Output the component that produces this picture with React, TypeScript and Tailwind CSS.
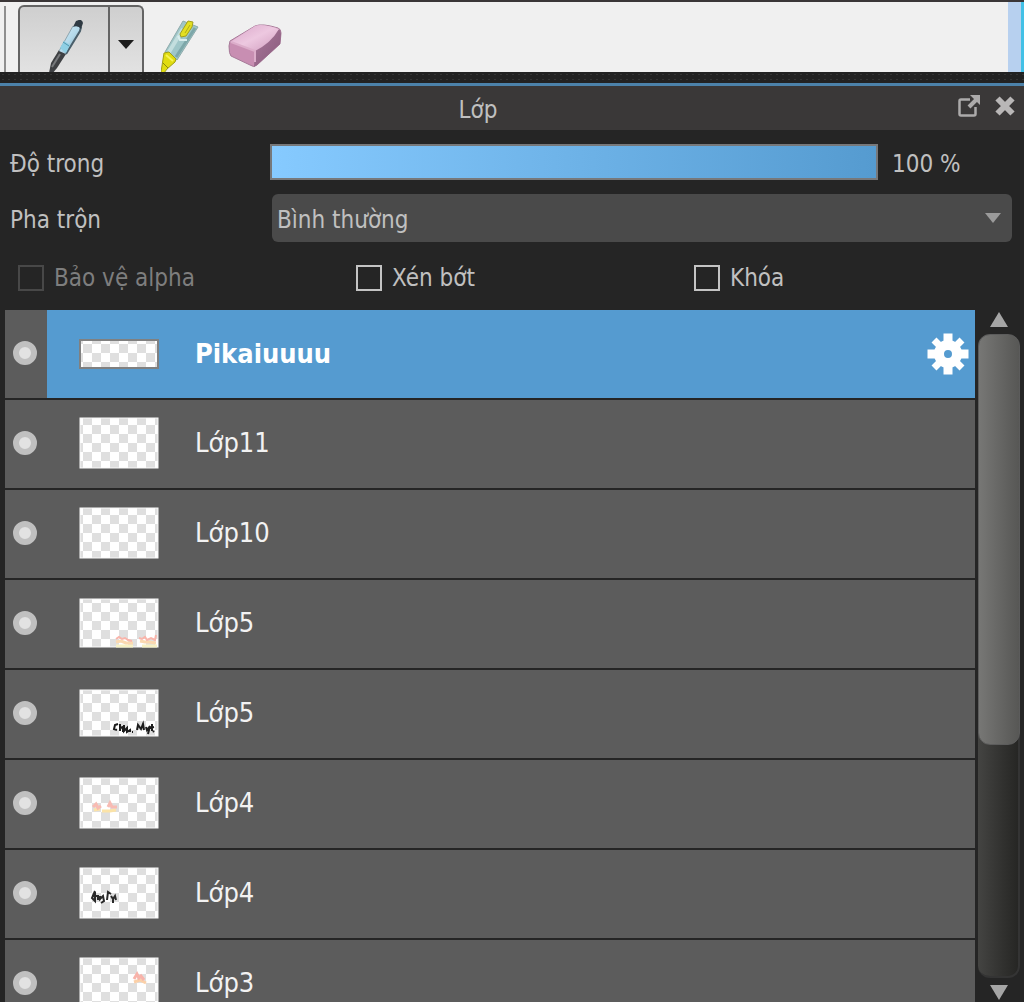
import React, { useRef, useState } from "react";

type Mark = "warmRight" | "inkRight" | "warmLeft" | "inkLeft" | "warmTop";

interface Layer {
  id: number;
  name: string;
  height: number;
  // height of the first, cut off row of checker tiles
  offset: number;
  mark?: Mark;
}

const layers: Layer[] = [
  { id: 1, name: "Pikaiuuuu", height: 30, offset: 14 },
  { id: 2, name: "Lớp11", height: 52, offset: 8 },
  { id: 3, name: "Lớp10", height: 52, offset: 8 },
  { id: 4, name: "Lớp5", height: 50, offset: 5, mark: "warmRight" },
  { id: 5, name: "Lớp5", height: 48, offset: 5, mark: "inkRight" },
  { id: 6, name: "Lớp4", height: 52, offset: 8, mark: "warmLeft" },
  { id: 7, name: "Lớp4", height: 52, offset: 8, mark: "inkLeft" },
  { id: 8, name: "Lớp3", height: 52, offset: 8, mark: "warmTop" },
];

const BrushIcon = () => (
  <svg width="38" height="54" viewBox="0 0 38 54" className="block">
    <defs>
      <linearGradient id="brushBody" x1="0" y1="0" x2="1" y2="1">
        <stop offset="0" stopColor="#d5eefa" />
        <stop offset="0.5" stopColor="#b4d9ea" />
        <stop offset="1" stopColor="#5f8494" />
      </linearGradient>
    </defs>
    <path d="M1 53 L3 43 L11 30 L18 34 L9 48 L4 54 Z" fill="#3e4043" />
    <path d="M4 47 L12 34" stroke="#77797c" strokeWidth="2" />
    <path d="M11 31 L25 6 L33 6 L32 10 L18 34 Z" fill="url(#brushBody)" />
    <path d="M33 7 L32 11 L18 34" fill="none" stroke="#4a5f6b" strokeWidth="2" />
    <path d="M11 31 L25 6" fill="none" stroke="#8fa5af" strokeWidth="1" />
    <path d="M12 28 L16 21 L22 25 L18 33 Z" fill="#8fcfe4" />
    <path d="M15 22 L21 26" stroke="#5397af" strokeWidth="1" />
    <path d="M25 7 L28 1 Q34 -2 35 3 L33 9 Q30 5 25 7 Z" fill="#2f3a43" />
  </svg>
);

const MarkerIcon = () => (
  <svg width="38" height="54" viewBox="0 0 38 54" className="block">
    <path d="M4 33 L22 2 L37 8 L16 41 Z" fill="#9fc6c8" stroke="#8fabac" strokeWidth="1" />
    <path d="M8 33 L22 10" stroke="#c3dede" strokeWidth="4" />
    <path d="M15 38 L34 9" stroke="#7da7a9" strokeWidth="3" />
    <path d="M19 15 L27 2 L32 3 L31 8 L25 17 L20 18 Z" fill="#e3df22" stroke="#a3a11e" strokeWidth="1" />
    <path d="M24 14 L29 6" stroke="#b1ab18" strokeWidth="1" />
    <path d="M17 17 L19 21 L26 21" fill="none" stroke="#d9eded" strokeWidth="2" />
    <path d="M3 34 L8 33 L15 40 L14 43 L6 50 L3 54 L0 53 Z" fill="#e0dc10" stroke="#a09f18" strokeWidth="1" />
    <path d="M2 44 L7 49" stroke="#8a8b0c" strokeWidth="1" />
    <path d="M5 36 L12 42" stroke="#f8f454" strokeWidth="2" />
  </svg>
);

const EraserIcon = () => (
  <svg width="54" height="44" viewBox="0 0 54 44" className="block">
    <defs>
      <linearGradient id="eraserTop" x1="0" y1="0" x2="1" y2="1">
        <stop offset="0" stopColor="#d9a5c8" />
        <stop offset="0.5" stopColor="#edc8e0" />
        <stop offset="1" stopColor="#d09cbe" />
      </linearGradient>
      <linearGradient id="eraserSide" x1="0" y1="0" x2="1" y2="1">
        <stop offset="0" stopColor="#a9769a" />
        <stop offset="1" stopColor="#885a7b" />
      </linearGradient>
    </defs>
    <path d="M2 17 L27 2 Q34 -1 50 4 Q53 5 53 9 L52 20 L29 41 Q26 44 22 41 L3 32 Q1 30 1 22 Z" fill="#c88eb2" stroke="#a77b99" strokeWidth="1" />
    <path d="M27 26 Q40 16 51 5 Q53 7 53 10 L52 20 L29 41 L26 43 Z" fill="url(#eraserSide)" />
    <path d="M2 18 L27 2 Q34 -1 51 5 Q43 19 27 27 Z" fill="url(#eraserTop)" />
    <path d="M3 18 L27 27 L27 38" fill="none" stroke="#dcadca" strokeWidth="2" />
  </svg>
);

const PopOutIcon = () => (
  <svg width="24" height="24" viewBox="0 0 24 24" className="block" fill="none" stroke="#acaaaa" strokeWidth="2.500">
    <path d="M13 5.500 H4 Q2.500 5.500 2.500 7 V20 Q2.500 21.500 4 21.500 H17 Q18.500 21.500 18.500 20 V13" />
    <path d="M12 13 L20 5" strokeWidth="4" />
    <path d="M13 1 H23 V11 Z" fill="#acaaaa" stroke="none" />
  </svg>
);

const CloseIcon = () => (
  <svg width="20" height="20" viewBox="0 0 20 20" className="block" stroke="#b9b7b7" strokeWidth="6">
    <path d="M2.500 2.500 L17.500 17.500 M17.500 2.500 L2.500 17.500" />
  </svg>
);

const GearIcon = () => (
  <svg width="42" height="42" viewBox="0 0 42 42" className="block" fill="none" stroke="#fff">
    <path d="M21 0.500 V12 M21 30 V41.500 M0.500 21 H12 M30 21 H41.500" strokeWidth="9" />
    <path d="M7 7 L14 14 M28 28 L35 35 M35 7 L28 14 M14 28 L7 35" strokeWidth="7" />
    <circle cx="21" cy="21" r="9" strokeWidth="10" />
  </svg>
);

const Triangle = ({ up, className }: { up?: boolean; className: string }) => (
  <svg viewBox="0 0 16 10" preserveAspectRatio="none" className={className} fill="currentColor">
    <path d={up ? "M0 10 L8 0 L16 10 Z" : "M0 0 L16 0 L8 10 Z"} />
  </svg>
);

const MarkDrawing = ({ mark, height }: { mark: Mark; height: number }) => {
  if (mark === "warmRight") {
    return (
      <g transform={`translate(36 ${height - 14})`} fill="none" strokeWidth="3">
        <path d="M1 12 H18 M27 12 H42" stroke="#f7f1c4" />
        <path d="M1 8 L6 7 L11 9 L18 9 M25 7 L30 8 L34 8 L41 9" stroke="#fbd9b0" />
        <path d="M1 5 L4 3 L7 5 L10 4 L13 6 L17 7 M24 4 L27 5 L30 3 L32 6 L36 4 L40 6 L41 1" stroke="#f9b5ab" strokeWidth="2" />
      </g>
    );
  }
  if (mark === "inkRight") {
    return (
      <g transform={`translate(34 ${height - 15})`} fill="none" stroke="#1c1c1c">
        <path d="M5 2 L2 3 L1 7 L4 8 M7 2 V9 M7 6 L10 5 V10 M11 3 L11 9 L14 6 L14 10 L17 8 V10 M19 10 H20" strokeWidth="2" />
        <path d="M24 8 L25 3 L28 7 L30 2 L31 8 M33 5 L34 8 L37 4 L35 12 M39 2 L39 9 M37 6 L41 5 M40 9 L41 10" strokeWidth="2" />
      </g>
    );
  }
  if (mark === "warmLeft") {
    return (
      <g transform="translate(13 25)" fill="none" strokeWidth="3">
        <path d="M2 8 L8 7 M10 9 H18 L24 8" stroke="#fbe3a8" />
        <path d="M1 5 L4 2 L6 6 L9 4 M16 5 L18 1 L20 5 L25 5" stroke="#f8bbb3" />
      </g>
    );
  }
  if (mark === "inkLeft") {
    return (
      <g transform="translate(12 23)" fill="none" stroke="#2a2a2a" strokeWidth="2">
        <path d="M4 1 L1 8 L4 11 V2 M1 6 H7 L7 10 M9 6 L9 9 L12 6 L13 11 L10 13 M16 10 L17 2 L20 4 M20 6 L22 9 L24 6 L25 10 M22 8 V13" />
      </g>
    );
  }
  return (
    <g transform="translate(53 15)" fill="none" strokeWidth="3">
      <path d="M2 10 L8 8 L14 11" stroke="#fbd0a8" />
      <path d="M2 7 L5 2 L7 6 L9 4 L12 8" stroke="#f8b3aa" />
    </g>
  );
};

const Thumbnail = ({ layer, selected }: { layer: Layer; selected: boolean }) => {
  const patternId = `checker-${layer.id}`;
  return (
    <svg width="80" height={layer.height} viewBox={`0 0 80 ${layer.height}`} className="block shrink-0">
      <defs>
        <pattern id={patternId} x="4" y={layer.offset - 9} width="18" height="18" patternUnits="userSpaceOnUse">
          <rect width="18" height="18" fill="#fff" />
          <rect width="9" height="9" fill="#dfdfdf" />
          <rect x="9" y="9" width="9" height="9" fill="#dfdfdf" />
        </pattern>
      </defs>
      <rect x="1" y="1" width="78" height={layer.height - 2} fill={`url(#${patternId})`} stroke={selected ? "#808080" : "#f8f8f8"} strokeWidth={selected ? 2 : 1} />
      {layer.mark && <MarkDrawing mark={layer.mark} height={layer.height} />}
    </svg>
  );
};

const Toolbar = () => (
  <div className="flex h-[72px] shrink-0 overflow-hidden border-t-2 border-[#3a3637] bg-[#f0f0f0]">
    <div className="mt-1 ml-1 w-[2px] bg-[#8f8f8f]" />
    <div className="mt-[3px] ml-3 flex overflow-hidden rounded-t-md border-2 border-b-0 border-[#646464] bg-linear-to-b from-[#cfcfcf] to-[#e2e2e2]">
      <button type="button" aria-label="Brush" className="flex w-[88px] items-start pt-[13px] pl-7">
        <BrushIcon />
      </button>
      <button type="button" aria-label="Brush options" className="flex w-[34px] items-start justify-center border-l-2 border-[#646464] pt-[33px] text-[#1c1c1c]">
        <Triangle className="h-[9px] w-4" />
      </button>
    </div>
    <button type="button" aria-label="Marker" className="ml-[17px] flex items-start pt-[17px]">
      <MarkerIcon />
    </button>
    <button type="button" aria-label="Eraser" className="ml-[29px] flex items-start pt-[22px]">
      <EraserIcon />
    </button>
    <div className="ml-auto w-4 border-r-[3px] border-[#42c0e6] bg-[#b7d0ef]" />
  </div>
);

const CheckOption = ({ label, disabled }: { label: string; disabled?: boolean }) => (
  <label className={disabled ? "flex items-center gap-[10px] pl-2 text-[#7e7e7e]" : "flex items-center gap-[10px] pl-2"}>
    <input
      type="checkbox"
      disabled={disabled}
      className="size-[26px] shrink-0 appearance-none border-2 border-[#c4c4c4] checked:bg-[#559bd0] disabled:border-[#484848]"
    />
    {label}
  </label>
);

export default function App() {
  const [opacity, setOpacity] = useState(100);
  const [selectedId, setSelectedId] = useState(1);
  const listRef = useRef<HTMLUListElement>(null);

  const scrollList = (amount: number) => {
    listRef.current?.scrollBy({ top: amount });
  };

  return (
    <div className="flex h-screen flex-col overflow-hidden bg-[#252525] font-['DejaVu_Sans_Condensed','DejaVu_Sans',sans-serif] text-2xl leading-8 text-[#c0c0c0]">
      <Toolbar />
      <div className="h-[11px] shrink-0 bg-[#222222] bg-[radial-gradient(#353535_1px,transparent_1px)] bg-size-[6px_5px]" />

      <header className="flex h-[47px] shrink-0 items-start border-t-[3px] border-[#4c82aa] bg-[#3a3838] pt-2">
        <h2 className="flex-1 text-center">Lớp</h2>
        <div className="flex w-[68px] items-center gap-[14px] pl-px">
          <button type="button" aria-label="Pop out">
            <PopOutIcon />
          </button>
          <button type="button" aria-label="Close">
            <CloseIcon />
          </button>
        </div>
      </header>

      <div className="shrink-0 pt-[14px] pl-[10px]">
        <div className="flex items-center pr-3">
          <label htmlFor="opacity" className="w-[260px] pt-1">
            Độ trong
          </label>
          <input
            id="opacity"
            type="range"
            min="0"
            max="100"
            value={opacity}
            onChange={(e) => setOpacity(Number(e.target.value))}
            className="h-9 min-w-0 flex-1 appearance-none border-2 border-[#77787a] bg-[linear-gradient(to_right,#86caff,#559bd0)] bg-no-repeat [&::-webkit-slider-thumb]:size-0 [&::-webkit-slider-thumb]:appearance-none"
            style={{ backgroundSize: `${opacity}% 100%` }}
          />
          <output htmlFor="opacity" className="w-[134px] pt-1 pl-[14px]">
            {opacity} %
          </output>
        </div>

        <div className="mt-[14px] flex items-center pr-3">
          <label htmlFor="blend" className="w-[262px] pt-1">
            Pha trộn
          </label>
          <div className="relative flex-1">
            <select id="blend" className="block h-12 w-full appearance-none rounded-md bg-[#4a4a4a] px-[5px] pt-1">
              <option>Bình thường</option>
            </select>
            <Triangle className="pointer-events-none absolute top-[19px] right-[11px] h-[10px] w-4 text-[#9b9b9b]" />
          </div>
        </div>

        <div className="mt-5 grid grid-cols-3">
          <CheckOption label="Bảo vệ alpha" disabled />
          <CheckOption label="Xén bớt" />
          <CheckOption label="Khóa" />
        </div>
      </div>

      <div className="mt-4 flex min-h-0 flex-1 pl-[5px]">
        <ul ref={listRef} className="flex flex-1 flex-col gap-[2px] overflow-y-auto text-[27px] text-[#f2f2f2] [scrollbar-width:none]">
          {layers.map((layer) => {
            const selected = layer.id === selectedId;
            return (
              <li key={layer.id} className="flex h-[88px] shrink-0 bg-[#5c5c5c]">
                <button type="button" aria-label="Visible" className="flex w-[42px] items-center pb-[2px] pl-2">
                  <span className="size-6 rounded-full border-[6px] border-[#c0c0c0] bg-[#e2e2e2]" />
                </button>
                <button
                  type="button"
                  onClick={() => setSelectedId(layer.id)}
                  className={
                    selected
                      ? "flex flex-1 items-center bg-[#559bd0] pr-[6px] pl-8 font-bold text-white"
                      : "flex flex-1 items-center pr-[6px] pb-[2px] pl-8"
                  }
                >
                  <Thumbnail layer={layer} selected={selected} />
                  <span className="ml-9 flex-1 text-left">{layer.name}</span>
                  {selected && <GearIcon />}
                </button>
              </li>
            );
          })}
        </ul>

        <div className="flex w-[49px] flex-col items-center pr-[2px] text-[#a5a5a5]">
          <button type="button" aria-label="Scroll up" onClick={() => scrollList(-90)} className="flex h-6 items-start pt-[2px]">
            <Triangle up className="h-[15px] w-[18px]" />
          </button>
          <div className="w-[42px] flex-1 rounded-xl border-r-2 border-b-2 border-[#343434] bg-linear-to-r from-[#444442] to-[#262624]">
            <div className="h-[64%] w-[42px] rounded-xl border border-[#5c5c5c] bg-linear-to-r from-[#777775] to-[#575755]" />
          </div>
          <button type="button" aria-label="Scroll down" onClick={() => scrollList(90)} className="flex h-6 items-start pt-[7px]">
            <Triangle className="h-[15px] w-[18px]" />
          </button>
        </div>
      </div>
    </div>
  );
}
